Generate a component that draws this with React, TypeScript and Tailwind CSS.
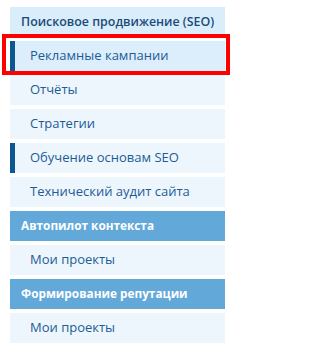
import React from "react";

type Row =
  | { kind: "head"; text: string }
  | { kind: "group"; text: string }
  | { kind: "item"; text: string; active?: boolean; bar?: boolean; hl?: boolean };

const rows: Row[] = [
  { kind: "head", text: "Поисковое продвижение (SEO)" },
  { kind: "item", text: "Рекламные кампании", active: true, bar: true, hl: true },
  { kind: "item", text: "Отчёты" },
  { kind: "item", text: "Стратегии" },
  { kind: "item", text: "Обучение основам SEO", bar: true },
  { kind: "item", text: "Технический аудит сайта" },
  { kind: "group", text: "Автопилот контекста" },
  { kind: "item", text: "Мои проекты" },
  { kind: "group", text: "Формирование репутации" },
  { kind: "item", text: "Мои проекты" },
];

export default function App() {
  return (
    <div
      className="w-[234px] h-[353px] bg-white pt-[7px] pl-[10px]"
      style={{ fontFamily: '"Open Sans", "Noto Sans", sans-serif' }}
    >
      <div className="w-[215px] flex flex-col gap-[4px]">
        {rows.map((r, i) => {
          if (r.kind === "head") {
            return (
              <div
                key={i}
                className="h-[30px] flex items-center pl-[11px] bg-[#daedfb] text-[#1c4b78] text-[12.4px] font-semibold whitespace-nowrap"
              >
                {r.text}
              </div>
            );
          }
          if (r.kind === "group") {
            return (
              <div
                key={i}
                className="h-[30px] flex items-center pl-[11px] bg-[#62a8d9] text-white text-[11.8px] font-bold whitespace-nowrap"
              >
                {r.text}
              </div>
            );
          }
          return (
            <div
              key={i}
              className={
                "relative h-[30px] flex items-center pl-[20px] text-[13px] font-medium text-[#1d5b96] whitespace-nowrap " +
                (r.active ? "bg-[#dcedfb]" : "bg-[#eef6fd]")
              }
            >
              {r.bar && <div className="absolute left-0 top-0 h-full w-[5px] bg-[#0c5791]" />}
              {r.text}
              {r.hl && (
                <div className="absolute left-[-8px] top-[-7px] w-[228px] h-[41px] border-[4px] border-[#ff0000] pointer-events-none" />
              )}
            </div>
          );
        })}
      </div>
    </div>
  );
}
